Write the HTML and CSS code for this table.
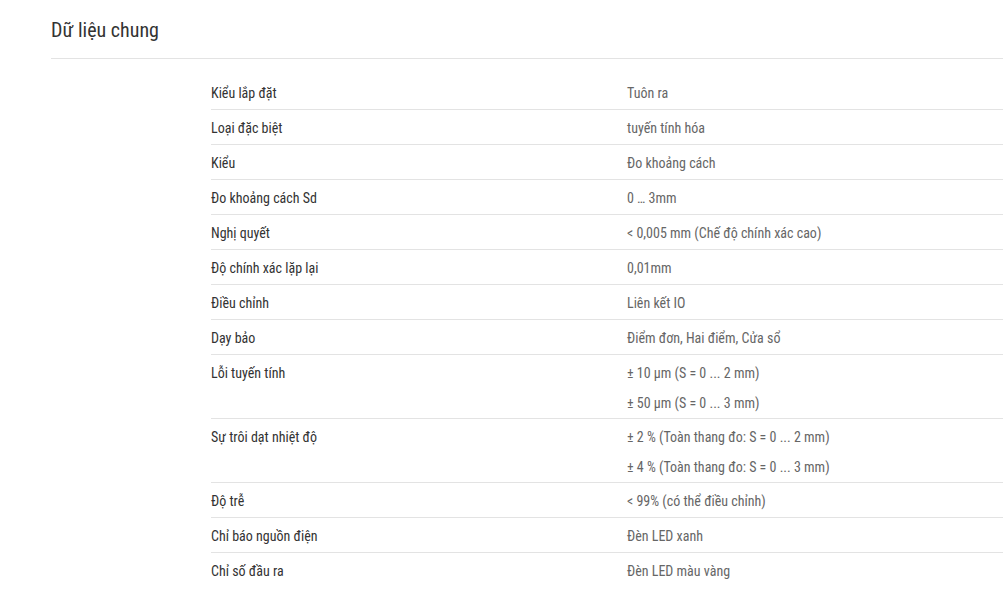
FILE: index.html
```html
<!DOCTYPE html>
<html lang="vi">
<head>
<meta charset="utf-8">
<title>Dữ liệu chung</title>
<link rel="stylesheet" href="styles.css">
</head>
<body>
<section class="section">
  <h2 class="section-title">Dữ liệu chung</h2>
  <div class="specs">
    <div class="row"><div class="label">Kiểu lắp đặt</div><div class="value"><div class="line">Tuôn ra</div></div></div>
    <div class="row"><div class="label">Loại đặc biệt</div><div class="value"><div class="line">tuyến tính hóa</div></div></div>
    <div class="row"><div class="label">Kiểu</div><div class="value"><div class="line">Đo khoảng cách</div></div></div>
    <div class="row"><div class="label">Đo khoảng cách Sd</div><div class="value"><div class="line">0 … 3mm</div></div></div>
    <div class="row"><div class="label">Nghị quyết</div><div class="value"><div class="line">&lt; 0,005 mm (Chế độ chính xác cao)</div></div></div>
    <div class="row"><div class="label">Độ chính xác lặp lại</div><div class="value"><div class="line">0,01mm</div></div></div>
    <div class="row"><div class="label">Điều chỉnh</div><div class="value"><div class="line">Liên kết IO</div></div></div>
    <div class="row"><div class="label">Dạy bảo</div><div class="value"><div class="line">Điểm đơn, Hai điểm, Cửa sổ</div></div></div>
    <div class="row"><div class="label">Lỗi tuyến tính</div><div class="value"><div class="line">± 10 µm (S = 0 ... 2 mm)</div><div class="line">± 50 µm (S = 0 ... 3 mm)</div></div></div>
    <div class="row"><div class="label">Sự trôi dạt nhiệt độ</div><div class="value"><div class="line">± 2 % (Toàn thang đo: S = 0 ... 2 mm)</div><div class="line">± 4 % (Toàn thang đo: S = 0 ... 3 mm)</div></div></div>
    <div class="row"><div class="label">Độ trễ</div><div class="value"><div class="line">&lt; 99% (có thể điều chỉnh)</div></div></div>
    <div class="row"><div class="label">Chỉ báo nguồn điện</div><div class="value"><div class="line">Đèn LED xanh</div></div></div>
    <div class="row last"><div class="label">Chỉ số đầu ra</div><div class="value"><div class="line">Đèn LED màu vàng</div></div></div>
  </div>
</section>
</body>
</html>
```
FILE: styles.css
```css
html, body {
  margin: 0;
  padding: 0;
  background: #ffffff;
}
body {
  font-family: "Roboto Condensed", "Roboto", "Liberation Sans", sans-serif;
  font-stretch: condensed;
  color: #333333;
  overflow: hidden;
}
.section {
  padding-left: 51px;
}
.section-title {
  margin: 0;
  font-size: 20px;
  font-weight: 400;
  line-height: 24px;
  padding-top: 18px;
  padding-bottom: 16px;
  color: #333333;
  border-bottom: 1px solid #e3e3e3;
}
.specs {
  margin-left: 160px;
  padding-top: 16px;
  font-size: 14px;
}
.row {
  display: flex;
  border-bottom: 1px solid #e3e3e3;
  padding-top: 3px;
}
.row.last {
  border-bottom: none;
}
.label {
  width: 416px;
  flex: none;
  line-height: 30px;
  padding-bottom: 1px;
  color: #333333;
}
.value {
  flex: 1;
  color: #666666;
}
.line {
  line-height: 30px;
}
```
